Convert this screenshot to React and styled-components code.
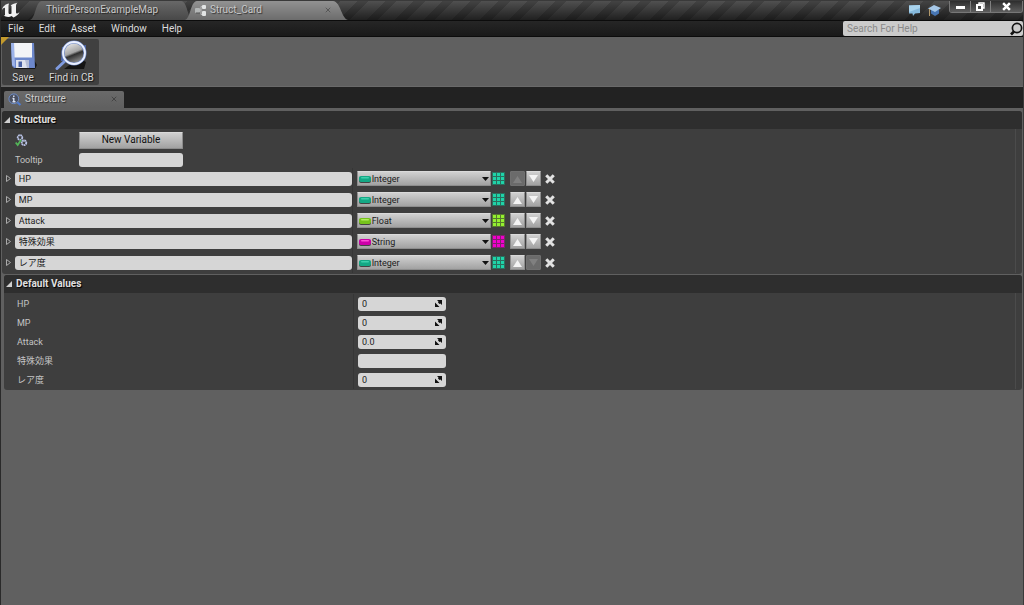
import React from "react";
import styled, { createGlobalStyle, css } from "styled-components";

const Global = createGlobalStyle`
  * { box-sizing: border-box; }
  html, body, #root { height: 100%; }
  body {
    margin: 0;
    background: #606060;
    color: #cfcfcf;
    font: 10px/14px Roboto, "Noto Sans CJK JP", sans-serif;
  }
  button, input, select { font: inherit; margin: 0; padding: 0; border: 0; color: inherit; }
  svg { display: block; flex: none; }
`;

const Window = styled.div`
  min-height: 100%;
  display: flex;
  flex-direction: column;
  border-left: 1px solid #2a2a2a;
  border-right: 1px solid #3a3a3a;
`;

const TitleBar = styled.header`
  display: flex;
  height: 20px;
  background:
    linear-gradient(#0000, #0009),
    repeating-linear-gradient(135deg, #505050 0 12px, #434343 12px 20px);
  border-top: 1px solid #3a3a3a;
`;
const Logo = styled.div`
  width: 29px;
  padding-left: 1px;
`;
const DocTab = styled.div`
  position: relative;
  width: ${(p) => p.$width}px;
  margin-right: -8px;
  padding: 0 16px 1px ${(p) => p.$inset}px;
  display: flex;
  align-items: center;
  gap: 3px;
  color: #c8c8c8;
  text-shadow: 1px 1px 1px #0009;
`;
const TabShape = styled.svg`
  position: absolute;
  inset: 0;
  width: 100%;
  height: 100%;
`;
const TabText = styled.span`
  position: relative;
  flex: 1;
  white-space: nowrap;
`;
const TabIcon = styled.span`
  position: relative;
`;
const CloseTab = styled.button`
  position: relative;
  width: 9px;
  height: 9px;
  background: none;
  display: grid;
  place-items: center;
`;
const TitleActions = styled.div`
  margin-left: auto;
  display: flex;
  align-items: flex-start;
`;
const IconButton = styled.button`
  background: none;
  width: 20px;
  height: 18px;
  display: grid;
  place-items: center;
`;
const WindowButtons = styled.div`
  display: flex;
  height: 12px;
  margin-left: 5px;
  border: 1px solid #777;
  border-top: 0;
  border-radius: 0 0 3px 3px;
  overflow: hidden;
`;
const WindowButton = styled.button`
  width: ${(p) => p.$width}px;
  display: grid;
  place-items: center;
  background: linear-gradient(#2e2e2e, #5e5e5e);
  & + & { border-left: 1px solid #808080; }
`;

const MenuBar = styled.nav`
  display: flex;
  height: 17px;
  border-top: 1px solid #0c0c0c;
  border-bottom: 1px solid #0c0c0c;
  background: linear-gradient(#262626, #191919);
`;
const MenuButton = styled.button`
  padding: 0 8px 0 7px;
  background: none;
  color: #dcdcdc;
`;
const HelpSearch = styled.label`
  margin-left: auto;
  width: 180px;
  display: flex;
  align-items: center;
  background: #cbcbcb;
  border-radius: 2px;
`;
const HelpInput = styled.input`
  flex: 1;
  min-width: 0;
  padding-left: 4px;
  background: none;
  color: #222;
  &::placeholder { color: #8a8a8a; opacity: 1; }
`;

const Toolbar = styled.div`
  height: 50px;
  padding: 2px 1px 1px;
  background: #606060;
  border-bottom: 1px solid #6a6a6a;
`;
const ToolGroup = styled.div`
  position: relative;
  width: max-content;
  height: 100%;
  display: flex;
  background: #404040;
  border-radius: 2px;
`;
const CornerMark = styled.svg`
  position: absolute;
  left: -1px;
  top: -2px;
`;
const ToolButton = styled.button`
  display: flex;
  flex-direction: column;
  align-items: center;
  gap: 1px;
  padding: 1px 5px 0;
  min-width: 42px;
  background: none;
  color: #d8d8d8;
  text-shadow: 1px 1px 1px #000a;
`;

const PanelTabs = styled.div`
  height: 21px;
  padding: 4px 3px 0;
  background: #222;
`;
const PanelTab = styled.div`
  width: 120px;
  height: 17px;
  padding: 0 6px 1px 4px;
  display: flex;
  align-items: center;
  gap: 3px;
  background: linear-gradient(#6a6a6a, #606060);
  border-radius: 2px 2px 0 0;
  color: #cfcfcf;
  text-shadow: 1px 1px 1px #0009;
`;

const Panel = styled.main`
  flex: 1;
  padding: 3px 1px 0;
`;
const Section = styled.section`
  background: #3e3e3e;
  margin-left: ${(p) => (p.$nested ? 2 : 0)}px;
  padding-bottom: 1px;
  border-radius: 3px;
  & + & { margin-top: 1px; }
`;
const SectionTitle = styled.h2`
  margin: 0;
  height: 18px;
  padding-left: 2px;
  display: flex;
  align-items: center;
  gap: 4px;
  background: #2e2e2e;
  border-radius: 3px 3px 0 0;
  font-size: 10px;
  font-weight: 700;
  color: #e0e0e0;
  text-shadow: 1px 1px 1px #000;
`;
const SectionBody = styled.div`
  margin-right: 6px;
  border-right: 1px solid #4b4b4b;
  font-size: 9px;
`;
const HeadRow = styled.div`
  height: ${(p) => p.$height}px;
  display: grid;
  grid-template-columns: 64px 104px;
  align-items: center;
  padding-left: 13px;
  color: #c4c4c4;
`;
const raised = css`
  background: linear-gradient(#d0d0d0, #a2a2a2);
  border: 1px solid #8d8d8d;
  border-top-color: #dadada;
  border-radius: 1px;
`;
const NewVariable = styled.button`
  ${raised}
  height: 17px;
  font-size: 10px;
  color: #111;
`;
const Field = styled.input`
  width: 100%;
  height: 14px;
  padding: 0 4px;
  background: #d6d6d6;
  border-radius: 3px;
  color: #1c1c1c;
`;
const PropertyRow = styled.div`
  height: ${(p) => p.$height}px;
  display: grid;
  grid-template-columns: 9fr 17fr;
`;
const NameCell = styled.div`
  display: flex;
  align-items: center;
  gap: 3px;
  padding-left: 4px;
  border-right: 1px solid #363636;
`;
const ValueCell = styled.div`
  display: flex;
  align-items: center;
  padding-left: 4px;
`;
const Expander = styled.button`
  background: none;
  width: 6px;
  display: grid;
  place-items: center;
`;
const TypePicker = styled.span`
  position: relative;
  display: block;
  width: 134px;
  height: 15px;
`;
const TypeSelect = styled.select`
  ${raised}
  appearance: none;
  display: block;
  width: 100%;
  height: 100%;
  padding-left: 14px;
  color: #1c1c1c;
`;
const TypePill = styled.svg`
  position: absolute;
  left: 2px;
  top: 5px;
  pointer-events: none;
`;
const TypeArrow = styled.svg`
  position: absolute;
  right: 2px;
  top: 6px;
  pointer-events: none;
`;
const ArrayButton = styled.button`
  background: none;
  margin: 0 5px 0 1px;
`;
const MoveButton = styled.button`
  ${raised}
  width: 15px;
  height: 15px;
  margin-right: 1px;
  display: grid;
  place-items: center;
  color: #f4f4f4;
  &:disabled { background: #6b6b6b; border-color: #707070; color: #808080; }
`;
const DeleteButton = styled.button`
  background: none;
  margin-left: 3px;
`;
const DefaultLabel = styled.label`
  padding-left: 9px;
  color: #c4c4c4;
`;
const Defaults = styled.div`
  padding-top: 1px;
`;
const Spinner = styled.span`
  position: relative;
  display: flex;
  width: 88px;
`;
const SpinMark = styled.svg`
  position: absolute;
  right: 4px;
  top: 3px;
  pointer-events: none;
`;

const UnrealMark = () => (
  <svg width="19" height="18" viewBox="0 0 19 18">
    <path
      fill="#f2f2f2"
      d="M0 9C.5 5.500 3.500 3 7 2.500L6.500 4.500V11.500C6.500 13 7.500 13.500 9.500 12.500V5.500C9.500 4.500 9 4.500 8.500 4.500C10.500 3 13 2.500 15.500 1.500C14.500 2.500 14 3.500 14 4.500V11.500C14 13 15.500 13 17.500 11C16.500 14 14 15 11.500 16.500L9.500 15C7.500 16.500 3.500 16 1.500 14.500C3 14.500 3 14 3 13V7.500C3 6 1.500 6.500 0 9Z"
    />
  </svg>
);

const StructIcon = () => (
  <svg width="12" height="13" viewBox="0 0 12 13">
    <path d="M4 6H6M8 2.500H6V10.500H8" fill="none" stroke="#bbb" />
    <rect x="0" y="4" width="5" height="5" rx="1" fill="#b4b7b7" />
    <path d="M1 9H5" fill="none" stroke="#555" />
    <rect x="7" y="1" width="4" height="4" rx="1" fill="#e2e4e4" />
    <rect x="7" y="7" width="4" height="5" rx="1" fill="#e2e4e4" />
  </svg>
);

const Cross = ({ color, size = 6, weight = 1 }) => (
  <svg width={size} height={size} viewBox="0 0 8 8">
    <path d="M1 1L7 7M7 1L1 7" stroke={color} strokeWidth={weight} />
  </svg>
);

const SaveIcon = () => (
  <svg width="30" height="30" viewBox="0 0 30 30">
    <path d="M6 29H27L29 25L26 20Z" fill="#161616" />
    <path d="M3 3H26L27 28H6L4 26Z" fill="#6d88cc" />
    <path d="M3 3H6L7 27L4 25Z" fill="#9db3ea" />
    <path d="M6 3H24V17.500H6.500Z" fill="#f3f4f7" />
    <path d="M8 20H21V28H8Z" fill="#dfe3ee" />
    <path d="M10.500 21.500H14V27H10.500Z" fill="#4861a4" />
    <path d="M17 20H21V28H19Z" fill="#b4bdd6" />
  </svg>
);

const FindIcon = () => (
  <svg width="32" height="30" viewBox="0 0 32 30">
    <defs>
      <linearGradient id="lens" x1=".2" y1="0" x2=".6" y2="1">
        <stop offset="0" stopColor="#f0f0f0" />
        <stop offset=".5" stopColor="#a4a4a4" />
        <stop offset=".6" stopColor="#303030" />
        <stop offset="1" stopColor="#999" />
      </linearGradient>
    </defs>
    <path d="M9 29H29L31 22L24 18Z" fill="#141414" />
    <path d="M7 7H11V21H6Z" fill="#4d67ac" />
    <path d="M26 6L31 5L30 19H25Z" fill="#4d67ac" />
    <path d="M2 28.500L11 20" stroke="#7f9be0" strokeWidth="3" strokeLinecap="round" />
    <circle cx="19" cy="13" r="11" fill="url(#lens)" stroke="#6f88c6" strokeWidth="3" />
    <circle cx="19" cy="13" r="11" fill="none" stroke="#eaf0ff" strokeWidth="1.800" />
  </svg>
);

const Magnifier = () => (
  <svg width="14" height="14" viewBox="0 0 14 14">
    <circle cx="8" cy="6" r="4.600" fill="none" stroke="#111" strokeWidth="1.700" />
    <path d="M5 9.500L2 12.500" stroke="#111" strokeWidth="2.600" />
  </svg>
);

const DetailsIcon = () => (
  <svg width="14" height="13" viewBox="0 0 14 13">
    <path d="M9 9L12.500 12" stroke="#4f7bd0" strokeWidth="2.200" />
    <circle cx="5.800" cy="5.800" r="4.900" fill="#4a5060" stroke="#6d8cc8" />
    <path d="M5.800 5V9M4.500 8.800H7.500M4.500 5.500H6M5.800 2.500V4" stroke="#dbe4f5" strokeWidth="1.400" />
  </svg>
);

const GearsIcon = () => (
  <svg width="13" height="13" viewBox="0 0 13 13">
    <circle cx="5" cy="3.500" r="2.300" fill="none" stroke="#b9c3e6" strokeWidth="1.800" strokeDasharray="1.600 .4" />
    <circle cx="9" cy="8.800" r="2.300" fill="none" stroke="#b9c3e6" strokeWidth="1.800" strokeDasharray="1.600 .4" />
    <path d="M.7 8.500L2.700 11L6 6" fill="none" stroke="#53b558" strokeWidth="1.800" />
  </svg>
);

const TYPES = {
  Integer: { base: "#14a885", light: "#3fd0ad", cell: "#1fd3a8" },
  Float: { base: "#76c21c", light: "#b0ee5c", cell: "#94f030" },
  String: { base: "#cc00a8", light: "#ff4cd8", cell: "#f000cb" },
};

const Pill = ({ type }) => (
  <TypePill width="12" height="7" viewBox="0 0 12 7">
    <rect x="0" y="1" width="12" height="6" rx="2" fill="#0009" />
    <rect x="0" y="0" width="12" height="6" rx="2" fill={TYPES[type].base} />
    <rect x="2" y="1" width="8" height="1.500" rx=".7" fill={TYPES[type].light} />
  </TypePill>
);

const ArrayGrid = ({ type }) => (
  <svg width="13" height="13" viewBox="0 0 13 13">
    <rect width="13" height="13" fill={TYPES[type].base} opacity=".45" />
    {[0, 1, 2].map((r) =>
      [0, 1, 2].map((c) => (
        <rect key={`${r}${c}`} x={c * 4 + 1} y={r * 4 + 1} width="3" height="3" fill={TYPES[type].cell} />
      ))
    )}
  </svg>
);

const Triangle = ({ down }) => (
  <svg width="9" height="8" viewBox="0 0 9 8">
    <path d={down ? "M0 0H9L4.500 7Z" : "M0 8H9L4.500 1Z"} fill="currentColor" />
  </svg>
);

const OpenMark = () => (
  <svg width="6" height="6" viewBox="0 0 6 6">
    <path d="M6 0V6H0Z" fill="#d0d0d0" />
  </svg>
);

const members = [
  { name: "HP", type: "Integer", value: "0" },
  { name: "MP", type: "Integer", value: "0" },
  { name: "Attack", type: "Float", value: "0.0" },
  { name: "特殊効果", type: "String", value: "" },
  { name: "レア度", type: "Integer", value: "0" },
];

const MemberRow = ({ member, first, last }) => (
  <PropertyRow $height={21}>
    <NameCell>
      <Expander aria-label={`Expand ${member.name}`}>
        <svg width="5" height="7" viewBox="0 0 5 7">
          <path d="M.5 .5L4.500 3.500L.5 6.500Z" fill="none" stroke="#aaa" />
        </svg>
      </Expander>
      <Field aria-label="Variable name" defaultValue={member.name} />
    </NameCell>
    <ValueCell>
      <TypePicker>
        <TypeSelect aria-label={`${member.name} type`} defaultValue={member.type}>
          {Object.keys(TYPES).map((t) => (
            <option key={t}>{t}</option>
          ))}
        </TypeSelect>
        <Pill type={member.type} />
        <TypeArrow width="7" height="4" viewBox="0 0 7 4">
          <path d="M0 0H7L3.500 4Z" fill="#111" />
        </TypeArrow>
      </TypePicker>
      <ArrayButton aria-label="Toggle array">
        <ArrayGrid type={member.type} />
      </ArrayButton>
      <MoveButton aria-label="Move up" disabled={first}>
        <Triangle />
      </MoveButton>
      <MoveButton aria-label="Move down" disabled={last}>
        <Triangle down />
      </MoveButton>
      <DeleteButton aria-label={`Remove ${member.name}`}>
        <Cross color="#e2e2e2" size={10} weight={2.4} />
      </DeleteButton>
    </ValueCell>
  </PropertyRow>
);

const DefaultRow = ({ member, index }) => (
  <PropertyRow $height={19}>
    <NameCell>
      <DefaultLabel htmlFor={`default-${index}`}>{member.name}</DefaultLabel>
    </NameCell>
    <ValueCell>
      <Spinner>
        <Field id={`default-${index}`} defaultValue={member.value} />
        {member.value && (
          <SpinMark width="7" height="7" viewBox="0 0 7 7">
            <path d="M2 0H7V5L5.500 3.500L4.500 4L3 2.500L3.500 1.500ZM0 2.500L1.500 4L3 5.500L4.500 7H0Z" fill="#111" />
          </SpinMark>
        )}
      </Spinner>
    </ValueCell>
  </PropertyRow>
);

export default function App() {
  return (
    <Window>
      <Global />
      <TitleBar>
        <Logo>
          <UnrealMark />
        </Logo>
        <DocTab $width={163} $inset={16}>
          <TabShape viewBox="0 0 163 19" preserveAspectRatio="none">
            <defs>
              <linearGradient id="idle" x1="0" y1="0" x2="0" y2="1">
                <stop offset="0" stopColor="#686868" />
                <stop offset="1" stopColor="#484848" />
              </linearGradient>
            </defs>
            <path d="M0 19C6 17 5 1 12 0H151C158 1 157 17 163 19Z" fill="url(#idle)" />
          </TabShape>
          <TabText>ThirdPersonExampleMap</TabText>
        </DocTab>
        <DocTab $width={163} $inset={10}>
          <TabShape viewBox="0 0 163 19" preserveAspectRatio="none">
            <defs>
              <linearGradient id="active" x1="0" y1="0" x2="0" y2="1">
                <stop offset="0" stopColor="#929292" />
                <stop offset="1" stopColor="#6c6c6c" />
              </linearGradient>
            </defs>
            <path d="M0 19C6 17 5 1 12 0H148C156 1 156 17 163 19Z" fill="url(#active)" />
          </TabShape>
          <TabIcon>
            <StructIcon />
          </TabIcon>
          <TabText>Struct_Card</TabText>
          <CloseTab aria-label="Close Struct_Card">
            <Cross color="#4a4a4a" />
          </CloseTab>
        </DocTab>
        <TitleActions>
          <IconButton aria-label="Feedback">
            <svg width="13" height="13" viewBox="0 0 13 13">
              <path d="M1 1.500L12 1V9L7 9.500L5 12L4.500 9.500H1Z" fill="#86b9dc" />
              <path d="M1 1.500L12 1V4L1 8Z" fill="#a9d4ee" />
            </svg>
          </IconButton>
          <IconButton aria-label="Tutorials">
            <svg width="13" height="13" viewBox="0 0 13 13">
              <path d="M3 5.500H11V9.500L7 12L3 9.500Z" fill="#4776b4" />
              <path d="M0 4.500L6 1L13 4L7 8Z" fill="#a6c8e8" />
              <path d="M1.500 5V12" stroke="#b39a6c" />
            </svg>
          </IconButton>
          <WindowButtons>
            <WindowButton $width={20} aria-label="Minimize">
              <svg width="9" height="7" viewBox="0 0 9 7">
                <rect y="3" width="9" height="3" fill="#fff" />
              </svg>
            </WindowButton>
            <WindowButton $width={20} aria-label="Restore">
              <svg width="9" height="9" viewBox="0 0 9 9">
                <path d="M3 3V1H8V6H6" fill="none" stroke="#fff" strokeWidth="1.400" />
                <rect x="1" y="3" width="5" height="5" fill="none" stroke="#fff" strokeWidth="2" />
              </svg>
            </WindowButton>
            <WindowButton $width={32} aria-label="Close">
              <Cross color="#fff" size={9} weight={2.2} />
            </WindowButton>
          </WindowButtons>
        </TitleActions>
      </TitleBar>
      <MenuBar>
        {["File", "Edit", "Asset", "Window", "Help"].map((m) => (
          <MenuButton key={m}>{m}</MenuButton>
        ))}
        <HelpSearch>
          <HelpInput aria-label="Search For Help" placeholder="Search For Help" />
          <Magnifier />
        </HelpSearch>
      </MenuBar>
      <Toolbar>
        <ToolGroup>
          <ToolButton>
            <SaveIcon />
            Save
          </ToolButton>
          <ToolButton>
            <FindIcon />
            Find in CB
          </ToolButton>
          <CornerMark width="8" height="8" viewBox="0 0 8 8">
            <path d="M0 0H8L0 8Z" fill="#c39a2c" />
          </CornerMark>
        </ToolGroup>
      </Toolbar>
      <PanelTabs>
        <PanelTab>
          <DetailsIcon />
          <TabText>Structure</TabText>
          <CloseTab aria-label="Close Structure">
            <Cross color="#3a3a3a" />
          </CloseTab>
        </PanelTab>
      </PanelTabs>
      <Panel>
        <Section>
          <SectionTitle>
            <OpenMark />
            Structure
          </SectionTitle>
          <SectionBody>
            <HeadRow $height={22}>
              <GearsIcon />
              <NewVariable>New Variable</NewVariable>
            </HeadRow>
            <HeadRow $height={17}>
              <label htmlFor="tooltip">Tooltip</label>
              <Field id="tooltip" />
            </HeadRow>
            {members.map((m, i) => (
              <MemberRow key={m.name} member={m} first={i === 0} last={i === members.length - 1} />
            ))}
          </SectionBody>
        </Section>
        <Section $nested>
          <SectionTitle>
            <OpenMark />
            Default Values
          </SectionTitle>
          <SectionBody>
            <Defaults>
              {members.map((m, i) => (
                <DefaultRow key={m.name} member={m} index={i} />
              ))}
            </Defaults>
          </SectionBody>
        </Section>
      </Panel>
    </Window>
  );
}
